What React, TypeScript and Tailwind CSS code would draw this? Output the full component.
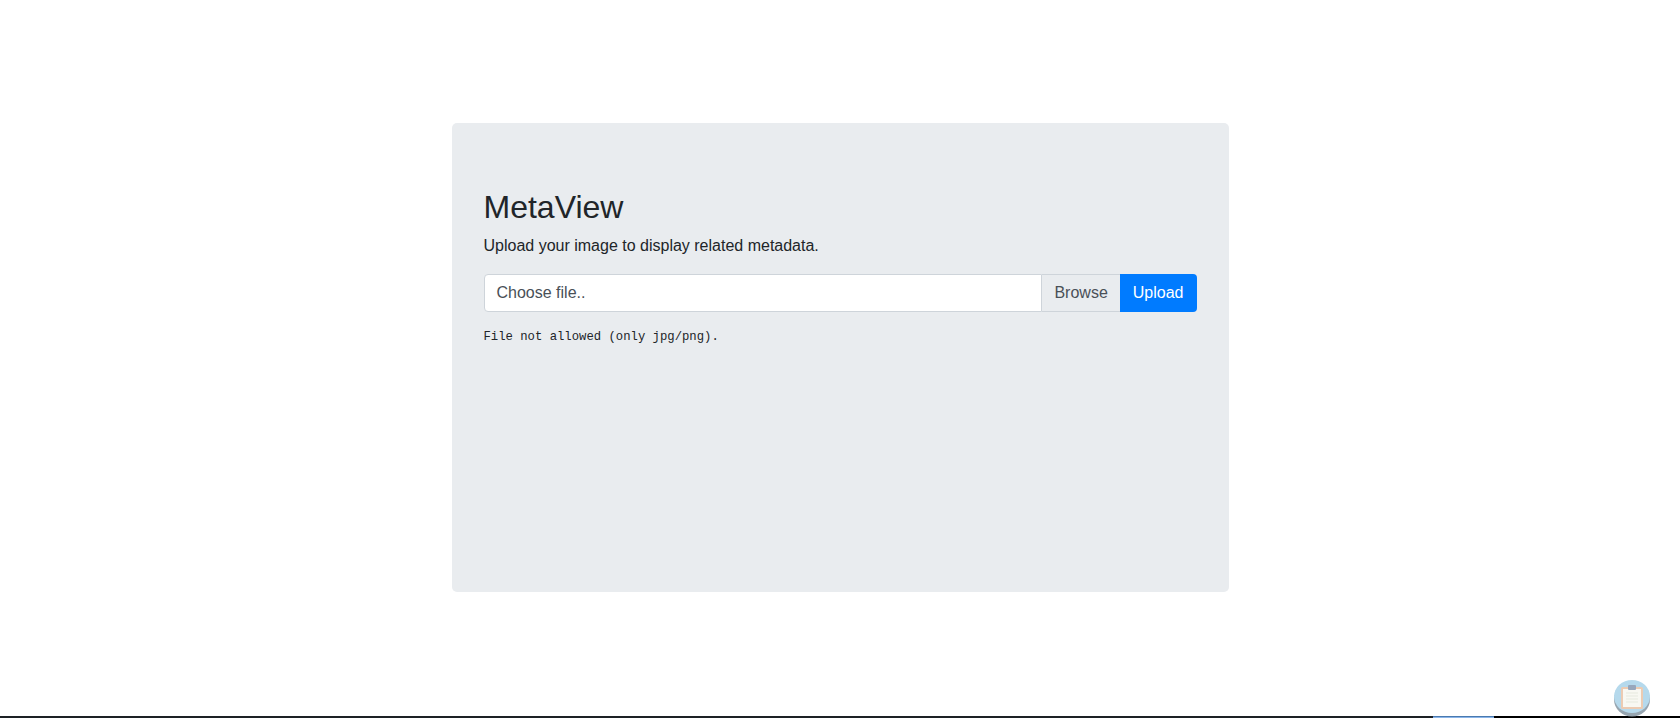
export default function App() {
  return (
    <div className="relative flex h-[718px] flex-col overflow-hidden bg-white font-['Liberation_Sans',sans-serif] text-[#212529]">
      <main className="flex flex-1 items-start justify-center pt-[123px]">
        <section className="h-[469px] w-[777px] rounded-[5px] bg-[#e9ecef] px-[32px] pt-[65px]">
          <h2 className="mb-[8px] text-[32px] leading-[38px] font-normal">MetaView</h2>
          <p className="mb-[16px] text-[16px] leading-[24px]">Upload your image to display related metadata.</p>
          <div className="flex h-[38px] text-[16px] leading-[24px]">
            <div className="flex-1 rounded-l-[4px] border border-[#ced4da] bg-white px-[12px] py-[6px] text-[#495057]">
              Choose file..
            </div>
            <div className="border-y border-[#ced4da] bg-[#e9ecef] px-[12px] py-[6px] text-[#495057]">
              Browse
            </div>
            <button className="rounded-r-[4px] bg-[#007bff] px-[13px] text-white">Upload</button>
          </div>
          <p className="mt-[16px] font-['Liberation_Mono',monospace] text-[12.25px] leading-[18px]">
            File not allowed (only jpg/png).
          </p>
        </section>
      </main>
      <footer className="flex h-[2px]">
        <div className="w-[1433px] bg-[#1d2125]" />
        <div className="w-[61px] border-t border-[#4a7ab0] bg-[#8ab4e8]" />
        <div className="flex-1 bg-black" />
      </footer>
      <div className="absolute top-[679px] left-[1614px] h-[38px] w-[36px]">
        <svg viewBox="0 0 36 38" className="h-full w-full">
          <defs>
            <filter id="soft">
              <feGaussianBlur stdDeviation="0.3" />
            </filter>
          </defs>
          <g filter="url(#soft)">
            <ellipse cx="18" cy="20.5" rx="18" ry="17" fill="#97a5b0" />
            <ellipse cx="18" cy="17.5" rx="18" ry="16.5" fill="#b5d9ec" />
            <rect x="7" y="8" width="22" height="22" rx="1.5" fill="#eccbb2" />
            <rect x="9" y="10" width="18" height="18" fill="#f8f8f2" />
            <rect x="14" y="6" width="8" height="5" rx="1" fill="#97a7bc" />
            <path d="M12 14h12M12 17h12M12 20h12M12 23h12" stroke="#e6e9de" strokeWidth="1" />
          </g>
        </svg>
      </div>
    </div>
  );
}
